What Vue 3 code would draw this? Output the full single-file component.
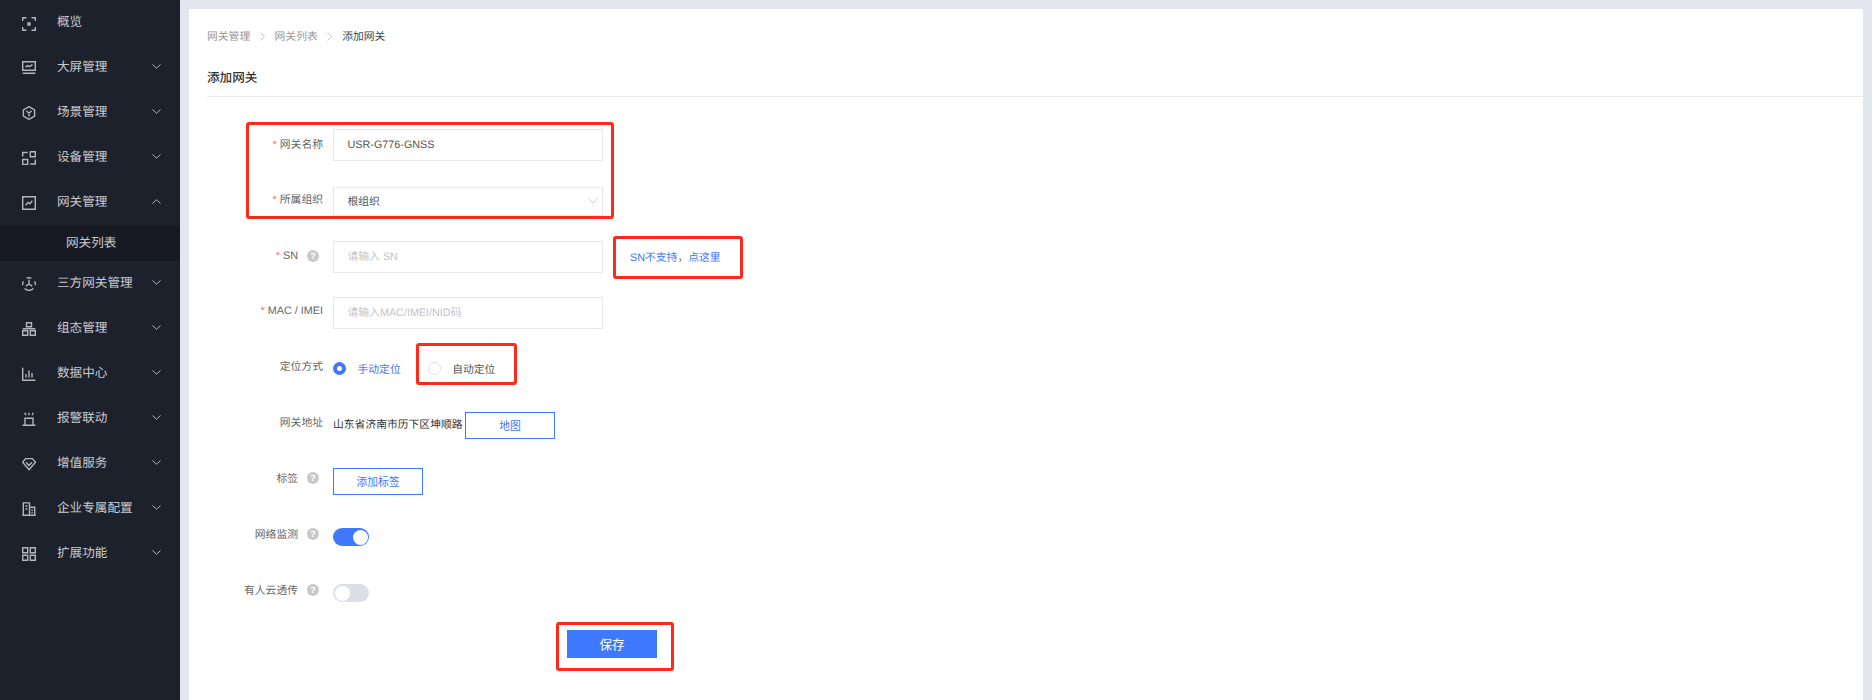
<template>
  <div class="page">
    <aside class="sidebar">
      <template v-for="item in menu" :key="item.name">
        <div class="menu-item">
          <svg class="menu-icon" viewBox="0 0 14 14"><path :d="item.icon" /></svg>
          <span class="menu-name">{{ item.name }}</span>
          <svg v-if="item.arrow" class="menu-arrow" viewBox="0 0 9 5">
            <path :d="item.arrow === 'up' ? 'M.5 4.5 4.5.8l4 3.7' : 'M.5.5l4 3.7 4-3.7'" />
          </svg>
        </div>
        <div v-if="item.child" class="menu-child">{{ item.child }}</div>
      </template>
    </aside>

    <main class="main">
      <div class="card">
        <div class="crumbs">
          <span>网关管理</span>
          <svg class="crumb-sep" viewBox="0 0 5 9"><path d="M.5.5l4 4-4 4" /></svg>
          <span>网关列表</span>
          <svg class="crumb-sep" viewBox="0 0 5 9"><path d="M.5.5l4 4-4 4" /></svg>
          <span class="crumb-on">添加网关</span>
        </div>
        <h2 class="title">添加网关</h2>

        <div class="form">
          <div class="row">
            <label class="lbl"><i>*</i> 网关名称</label>
            <div class="input val">USR-G776-GNSS</div>
          </div>
          <div class="row">
            <label class="lbl up-1"><i>*</i> 所属组织</label>
            <div class="input val select">
              根组织
              <svg class="select-arrow" viewBox="0 0 10 6"><path d="M.5.5l4.5 4.5L9.5.5" /></svg>
            </div>
          </div>
          <div class="row">
            <label class="lbl has-help"><i>*</i>&nbsp;SN<b class="help">?</b></label>
            <div class="input ph">请输入 SN</div>
            <a class="sn-link">SN不支持，点这里</a>
          </div>
          <div class="row">
            <label class="lbl up-1"><i>*</i> MAC / IMEI</label>
            <div class="input ph">请输入MAC/IMEI/NID码</div>
          </div>
          <div class="row">
            <label class="lbl up-2">定位方式</label>
            <span class="radio on"></span>
            <span class="radio-text on">手动定位</span>
            <span class="radio second"></span>
            <span class="radio-text">自动定位</span>
          </div>
          <div class="row">
            <label class="lbl up-2">网关地址</label>
            <span class="addr">山东省济南市历下区坤顺路</span>
            <button class="btn-line">地图</button>
          </div>
          <div class="row">
            <label class="lbl up-2 has-help">标签<b class="help">?</b></label>
            <button class="btn-line">添加标签</button>
          </div>
          <div class="row">
            <label class="lbl up-2 has-help">网络监测<b class="help">?</b></label>
            <span class="switch on"></span>
          </div>
          <div class="row">
            <label class="lbl up-2 has-help">有人云透传<b class="help">?</b></label>
            <span class="switch"></span>
          </div>
          <button class="btn-save">保存</button>

          <div class="mark mark-a"></div>
          <div class="mark mark-b"></div>
          <div class="mark mark-c"></div>
          <div class="mark mark-d"></div>
        </div>
      </div>
    </main>
  </div>
</template>

<script setup>
const menu = [
  { name: '概览', icon: 'M4.5.7H.7v3.4M9.5.7h3.8v3.4M.7 9.9v3.4h3.8M13.3 9.9v3.4H9.5M6 6h2v2H6z' },
  { name: '大屏管理', arrow: 'down', icon: 'M.7.7h12.6v8.6H.7zM.7 12.3h12.6M3.5 6.2l2-1.7 2 1.2 3-2' },
  { name: '场景管理', arrow: 'down', icon: 'M7 .7l5.6 3.1v6.4L7 13.3l-5.6-3.1V3.8zM4.2 5 7 7l2.8-2M7 7v3.4' },
  { name: '设备管理', arrow: 'down', icon: 'M.7 5.5V1.5h5M8.3.7h5v5h-5zM.7 8.5h5v5h-5zM8.3 13h5V8.5' },
  { name: '网关管理', arrow: 'up', child: '网关列表', icon: 'M.7.7h12.6v12.6H.7zM3.6 9.2 6 6.4l1.8 1.4 2.6-3' },
  { name: '三方网关管理', arrow: 'down', icon: 'M4.6 1.2a6.3 6.3 0 0 1 4.8 0M1.4 4.2a6.3 6.3 0 0 0-.6 4M13.2 8.2a6.3 6.3 0 0 0-.6-4M2.6 11.6a6.3 6.3 0 0 0 8.8 0M7 2.8V7M7 7 3.8 9.2M7 7l3.2 2.2' },
  { name: '组态管理', arrow: 'down', icon: 'M4.5.7h5v4h-5zM.7 8.8h5v4.5h-5zM8.3 8.8h5v4.5h-5zM.7 6.7h12.6' },
  { name: '数据中心', arrow: 'down', icon: 'M.7.7v12.6h12.6M4 10.5V7M7 10.5V3.5M10 10.5V6' },
  { name: '报警联动', arrow: 'down', icon: 'M.5 13.3h13M3 13V6.3h8V13M2.8.7l1 2.6M7 .7v2.6M11.2.7l-1 2.6' },
  { name: '增值服务', arrow: 'down', icon: 'M3.5 1.6h7l3 3.6L7 12.6.7 5.2zM4 5.2 7 8.4l3-3.2' },
  { name: '企业专属配置', arrow: 'down', icon: 'M.3 13.3h13.4M1.3 13V.9h6.2V13M7.5 5.3h5.2V13M3.4 4h2M3.4 7h2M9.4 8h1.4M9.4 10.5h1.4' },
  { name: '扩展功能', arrow: 'down', icon: 'M.7.7h5v5h-5zM8.3.7h5v5h-5zM.7 8.3h5v5h-5zM8.3 8.3h5v5h-5z' }
]
</script>

<style>
html, body {
  margin: 0;
  height: 100%;
  overflow: hidden;
}
</style>

<style scoped>
.page {
  display: flex;
  height: 700px;
  font-family: "Liberation Sans", "Noto Sans CJK SC", sans-serif;
  font-size: 10.8px;
  text-rendering: geometricPrecision;
  background: #e3e6ef;
}

.sidebar {
  width: 180px;
  flex: none;
  background: #1d212c;
  color: #c8cad0;
  font-size: 12.6px;
  overflow: hidden;
}

.menu-item {
  display: flex;
  align-items: center;
  height: 45px;
  padding-left: 22px;
}
.menu-item:first-child {
  height: 43.5px;
}

.menu-icon {
  width: 14px;
  height: 14px;
  margin-top: 4px;
  fill: none;
  stroke: #b4b6bc;
  stroke-width: 1.4;
}

.menu-name {
  margin-left: 21px;
  margin-bottom: 2px;
  flex: 1;
}

.menu-arrow {
  width: 9px;
  height: 5px;
  margin-right: 19px;
  fill: none;
  stroke: #b4b6bc;
  stroke-width: 1;
}

.menu-child {
  height: 36px;
  margin: 1.5px 0 -1.5px;
  line-height: 37px;
  padding-left: 66px;
  background: #171a23;
}

.main {
  flex: 1;
  padding: 9px 9px 0;
}

.card {
  background: #fff;
  height: 100%;
}

.crumbs {
  display: flex;
  align-items: center;
  height: 54px;
  padding-left: 18px;
  color: #999;
}
.crumb-sep {
  width: 5px;
  height: 9px;
  margin: 0 9.7px;
  fill: none;
  stroke: #c4c4c4;
  stroke-width: 1;
}
.crumb-on {
  color: #444;
}

.title {
  margin: 0 0 0 18px;
  height: 34px;
  line-height: 31px;
  font-size: 12.6px;
  font-weight: 500;
  color: #333;
  border-bottom: 1px solid #e8eaf2;
  box-sizing: border-box;
}

.form {
  position: relative;
  padding-top: 32px;
}

.row {
  display: flex;
  align-items: center;
  height: 32.4px;
  margin-bottom: 23.6px;
}

.lbl {
  width: 134px;
  margin-right: 10px;
  margin-bottom: 3px;
  text-align: right;
  color: #666;
  flex: none;
}
.lbl.up-1 {
  margin-bottom: 5px;
}
.lbl.up-2 {
  margin-bottom: 6px;
}
.lbl i {
  color: #f56c6c;
  font-style: normal;
}
.has-help {
  display: flex;
  justify-content: flex-end;
  align-items: center;
}

.help {
  width: 12px;
  height: 12px;
  margin-left: 9px;
  margin-right: 4px;
  border-radius: 50%;
  background: #c9c9c9;
  color: #fff;
  font: 700 9px/12px "Liberation Sans", sans-serif;
  text-align: center;
}

.input {
  position: relative;
  width: 270px;
  height: 32.4px;
  line-height: 31px;
  padding-left: 13.5px;
  border: 1px solid #e6e8f0;
  box-sizing: border-box;
}
.select {
  height: 29px;
  line-height: 28px;
}
.val {
  color: #555;
}
.ph {
  color: #c2c4c8;
}

.select-arrow {
  position: absolute;
  right: 4px;
  top: 10.5px;
  width: 10px;
  height: 6px;
  fill: none;
  stroke: #c8cad0;
  stroke-width: 1;
}

.sn-link {
  margin-left: 27px;
  margin-bottom: 1px;
  color: #3d78fd;
}

.radio {
  width: 13px;
  height: 13px;
  border-radius: 50%;
  border: 1px solid #dcdfe6;
  box-sizing: border-box;
  flex: none;
  margin-bottom: 1px;
}
.radio.on {
  border: 4.5px solid #3d78fd;
  background: #fff;
}
.radio.second {
  margin-left: 27px;
}
.radio-text {
  margin-left: 11.5px;
  margin-bottom: 1px;
  color: #555;
}
.radio-text.on {
  color: #3d78fd;
}

.addr {
  color: #333;
  width: 132px;
  margin-bottom: 2px;
  white-space: nowrap;
}

.btn-line {
  width: 90px;
  height: 27px;
  padding: 0;
  border: 1px solid #3d78fd;
  background: #fff;
  color: #3d78fd;
  font: inherit;
}

.switch {
  position: relative;
  width: 36px;
  height: 18px;
  border-radius: 9px;
  background: #dcdfe8;
}
.switch::after {
  content: "";
  position: absolute;
  top: 1.5px;
  left: 1.5px;
  width: 15px;
  height: 15px;
  border-radius: 50%;
  background: #fff;
}
.switch.on {
  background: #3d78fd;
}
.switch.on::after {
  left: 19.5px;
}

.btn-save {
  display: block;
  width: 90px;
  height: 28px;
  margin-left: 378px;
  margin-top: -3px;
  padding: 0;
  border: 0;
  background: #3d78fd;
  color: #fff;
  font: inherit;
  font-size: 12.6px;
}

.mark {
  position: absolute;
  border: 3px solid #ff2a1a;
  border-radius: 3px;
  box-sizing: border-box;
}
.mark-a { left: 57px; top: 25px; width: 368px; height: 97px; }
.mark-b { left: 424px; top: 139px; width: 130px; height: 43px; }
.mark-c { left: 227px; top: 246px; width: 101px; height: 42px; }
.mark-d { left: 367px; top: 525px; width: 118px; height: 49px; }
</style>
